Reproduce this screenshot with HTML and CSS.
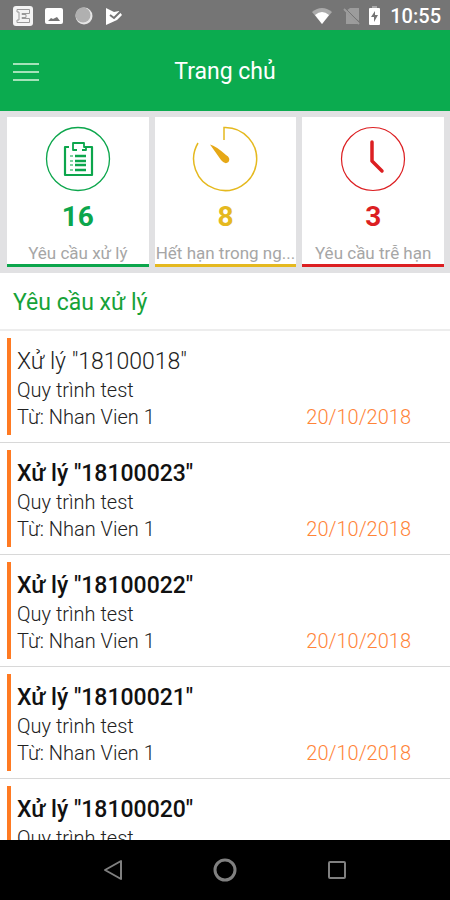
FILE: index.html
```html
<!DOCTYPE html>
<html lang="vi">
<head>
<meta charset="utf-8">
<meta name="viewport" content="width=device-width, initial-scale=1">
<title>Trang chủ</title>
<link rel="stylesheet" href="styles.css">
</head>
<body>
<div class="screen">
  <div class="status-bar">
    <div class="status-group status-left">
      <svg width="20" height="20" viewBox="0 0 20 20"><rect width="20" height="20" rx="3" fill="#f4f4f4"/><path d="M4 3.500h12.500v4H9v1h4v3H9v1h7.500v4H4v-2.500h2v-8H4z" fill="none" stroke="#9a9a9a" stroke-width="1"/></svg>
      <svg width="18" height="18" viewBox="0 0 18 18"><rect y="1" width="18" height="16" rx="2" fill="#fff"/><path d="M3 14l3-3 2 1 4-2 3 4z" fill="#757575"/></svg>
      <svg width="18" height="18" viewBox="0 0 18 18"><circle cx="9" cy="9" r="8.500" fill="#e6e6e6"/><circle cx="8" cy="8" r="7.500" fill="#b0b0b0"/></svg>
      <svg width="18" height="18" viewBox="0 0 18 18"><path d="M1 1l8 4 5-1 3 4-5 5L1 18z" fill="#fff"/><path d="M5 8l4 3 7-7" fill="none" stroke="#757575" stroke-width="2"/></svg>
    </div>
    <div class="status-group status-right">
      <svg width="22" height="18" viewBox="0 0 22 18"><path d="M1 5Q11-3 21 5L11 17z" fill="#aaa"/><path d="M4 8Q11 2 18 8L11 17z" fill="#fff"/></svg>
      <svg class="no-sim" width="18" height="18" viewBox="0 0 18 18"><path d="M3 4l4-3h9v13z" fill="#9c9c9c"/><path d="M3 5v12h12z" fill="#9c9c9c"/><path d="M1 2l15 15" stroke="#9c9c9c" stroke-width="2"/><path d="M2 1l15 15" stroke="#757575"/></svg>
      <svg class="battery" width="11" height="19" viewBox="0 0 11 19"><path d="M3 0h5v2H3z" fill="#aaa"/><rect y="2" width="11" height="17" rx="1" fill="#fff"/><path d="M6 5l-4 6h3v5l4-7H6z" fill="#757575"/></svg>
      <span class="clock">10:55</span>
    </div>
  </div>

  <header class="app-bar">
    <button class="menu" type="button" aria-label="Menu">
      <svg width="26" height="20" viewBox="0 0 26 20"><path d="M0 2h26M0 10h26M0 18h26" stroke="#a5e2b9" stroke-width="2"/></svg>
    </button>
    <h1 class="app-title">Trang chủ</h1>
  </header>

  <nav class="stats">
    <a class="stat stat-green" href="#pending">
      <svg width="66" height="66" viewBox="0 0 66 66" fill="none" stroke="currentColor"><circle cx="33" cy="33" r="31.500" stroke-width="1.300"/><path d="M24 21h-4v28h27V21h-7" stroke-width="2.200" stroke-linejoin="round"/><path d="M32 24h-4v-7h11v4h2v3h-4" stroke-width="1.800" stroke-linejoin="round"/><path d="M30 30h11M30 35h11M30 39h11M30 44h11" stroke-width="2.500"/><path d="M25 30h3M25 35h3M25 39h3M25 44h3" stroke-width="1.500" opacity=".7"/></svg>
      <strong class="stat-value">16</strong>
      <span class="stat-label">Yêu cầu xử lý</span>
    </a>
    <a class="stat stat-yellow" href="#expiring">
      <svg width="66" height="66" viewBox="0 0 66 66" fill="none" stroke="currentColor"><path d="M32 14V1.500A31.500 31.500 0 1 1 6 17" stroke-width="1.500"/><path d="M18 18.500Q24 20 34 29Q39 32 36.500 36Q33 39 29 34Z" fill="#e6a817" stroke="none"/></svg>
      <strong class="stat-value">8</strong>
      <span class="stat-label">Hết hạn trong ng...</span>
    </a>
    <a class="stat stat-red" href="#overdue">
      <svg width="66" height="66" viewBox="0 0 66 66" fill="none" stroke="currentColor"><circle cx="33" cy="33" r="31.500" stroke-width="1.200"/><path d="M32 16v19l10 10" stroke-width="3.500" stroke-linecap="round" stroke-linejoin="round"/></svg>
      <strong class="stat-value">3</strong>
      <span class="stat-label">Yêu cầu trễ hạn</span>
    </a>
  </nav>

  <main class="content" id="pending">
    <h2 class="section-title">Yêu cầu xử lý</h2>
    <ul class="requests">
      <li class="request"><a class="request-link" href="#18100018"><span class="request-title">Xử lý "18100018"</span><span>Quy trình test</span><span class="request-meta"><span>Từ: Nhan Vien 1</span><time class="date" datetime="2018-10-20">20/10/2018</time></span></a></li>
      <li class="request unread"><a class="request-link" href="#18100023"><span class="request-title">Xử lý "18100023"</span><span>Quy trình test</span><span class="request-meta"><span>Từ: Nhan Vien 1</span><time class="date" datetime="2018-10-20">20/10/2018</time></span></a></li>
      <li class="request unread"><a class="request-link" href="#18100022"><span class="request-title">Xử lý "18100022"</span><span>Quy trình test</span><span class="request-meta"><span>Từ: Nhan Vien 1</span><time class="date" datetime="2018-10-20">20/10/2018</time></span></a></li>
      <li class="request unread"><a class="request-link" href="#18100021"><span class="request-title">Xử lý "18100021"</span><span>Quy trình test</span><span class="request-meta"><span>Từ: Nhan Vien 1</span><time class="date" datetime="2018-10-20">20/10/2018</time></span></a></li>
      <li class="request unread"><a class="request-link" href="#18100020"><span class="request-title">Xử lý "18100020"</span><span>Quy trình test</span></a></li>
    </ul>
  </main>

  <div class="system-nav">
    <button type="button" aria-label="Quay lại"><svg width="24" height="24" viewBox="0 0 24 24"><path d="M20 3v18L4 12z"/></svg></button>
    <button type="button" aria-label="Màn hình chính"><svg width="24" height="24" viewBox="0 0 24 24"><circle cx="12" cy="12" r="10" stroke-width="3"/></svg></button>
    <button type="button" aria-label="Gần đây"><svg width="24" height="24" viewBox="0 0 24 24"><rect x="4" y="4" width="16" height="16" rx="1"/></svg></button>
  </div>
</div>
</body>
</html>
```
FILE: styles.css
```css
* {
  box-sizing: border-box;
}

body {
  margin: 0;
  font-family: Roboto, "Noto Sans", sans-serif;
  color: #222;
  background: #fff;
}

h1,
h2,
ul {
  margin: 0;
  padding: 0;
}

svg {
  display: block;
  flex: none;
}

a {
  color: inherit;
  text-decoration: none;
}

button {
  display: flex;
  justify-content: center;
  align-items: center;
  padding: 0;
  border: 0;
  background: none;
}

.screen {
  display: flex;
  flex-direction: column;
  height: 100vh;
}

.status-bar {
  display: flex;
  justify-content: space-between;
  align-items: center;
  flex: none;
  height: 30px;
  padding: 1px 9px 0 13px;
  background: #757575;
}

.status-group {
  display: flex;
  align-items: center;
}

.status-left {
  gap: 12px;
}

.no-sim {
  margin-left: 10px;
}

.battery {
  margin: 0 10px 0 8px;
}

.clock {
  font-size: 20px;
  font-weight: 500;
  color: #fff;
}

.app-bar {
  display: grid;
  grid-template-columns: 52px 1fr 52px;
  align-items: center;
  flex: none;
  height: 81px;
  padding-top: 2px;
  background: #0bab4f;
}

.menu {
  height: 48px;
}

.app-title {
  font-size: 23px;
  font-weight: 400;
  text-align: center;
  color: #fff;
}

.stats {
  display: grid;
  grid-template-columns: repeat(3, minmax(0, 1fr));
  gap: 6px;
  flex: none;
  padding: 6px 6px 6px 7px;
  background: #e1e1e3;
}

.stat {
  display: flex;
  flex-direction: column;
  align-items: center;
  padding-top: 9px;
  border-bottom: 3px solid;
  background: #fff;
}

.stat-green {
  color: #0ca64c;
}

.stat-yellow {
  color: #e5b91f;
}

.stat-red {
  color: #dc1f22;
}

.stat-value {
  margin-top: 8px;
  font-size: 28px;
  font-weight: 700;
  line-height: 34px;
}

.stat-label {
  width: 100%;
  margin-top: 8px;
  overflow: hidden;
  font-size: 17px;
  font-weight: 400;
  line-height: 22px;
  text-align: center;
  text-overflow: ellipsis;
  white-space: nowrap;
  color: #a6a6a6;
}

.content {
  flex: 1;
  min-height: 0;
  overflow: hidden;
}

.section-title {
  padding: 3px 13px 0;
  border-bottom: 2px solid #ededed;
  font-size: 23px;
  font-weight: 400;
  line-height: 53px;
  color: #17a238;
}

.requests {
  list-style: none;
}

.request {
  padding: 7px;
  border-bottom: 1px solid #d8d8d8;
}

.request-link {
  display: flex;
  flex-direction: column;
  padding: 8px 0 4px 6px;
  border-left: 4px solid #ff7a22;
  font-size: 20px;
  font-weight: 300;
  line-height: 27px;
}

.request-title {
  font-size: 23px;
  line-height: 31px;
}

.unread .request-title {
  font-weight: 500;
  color: #111;
}

.request-meta {
  display: flex;
  justify-content: space-between;
  padding-right: 32px;
}

.date {
  color: #ff8438;
}

.system-nav {
  display: flex;
  justify-content: center;
  gap: 88px;
  flex: none;
  height: 60px;
  background: #000;
}

.system-nav svg {
  fill: none;
  stroke: #808080;
  stroke-width: 2;
  stroke-linejoin: round;
}
```
